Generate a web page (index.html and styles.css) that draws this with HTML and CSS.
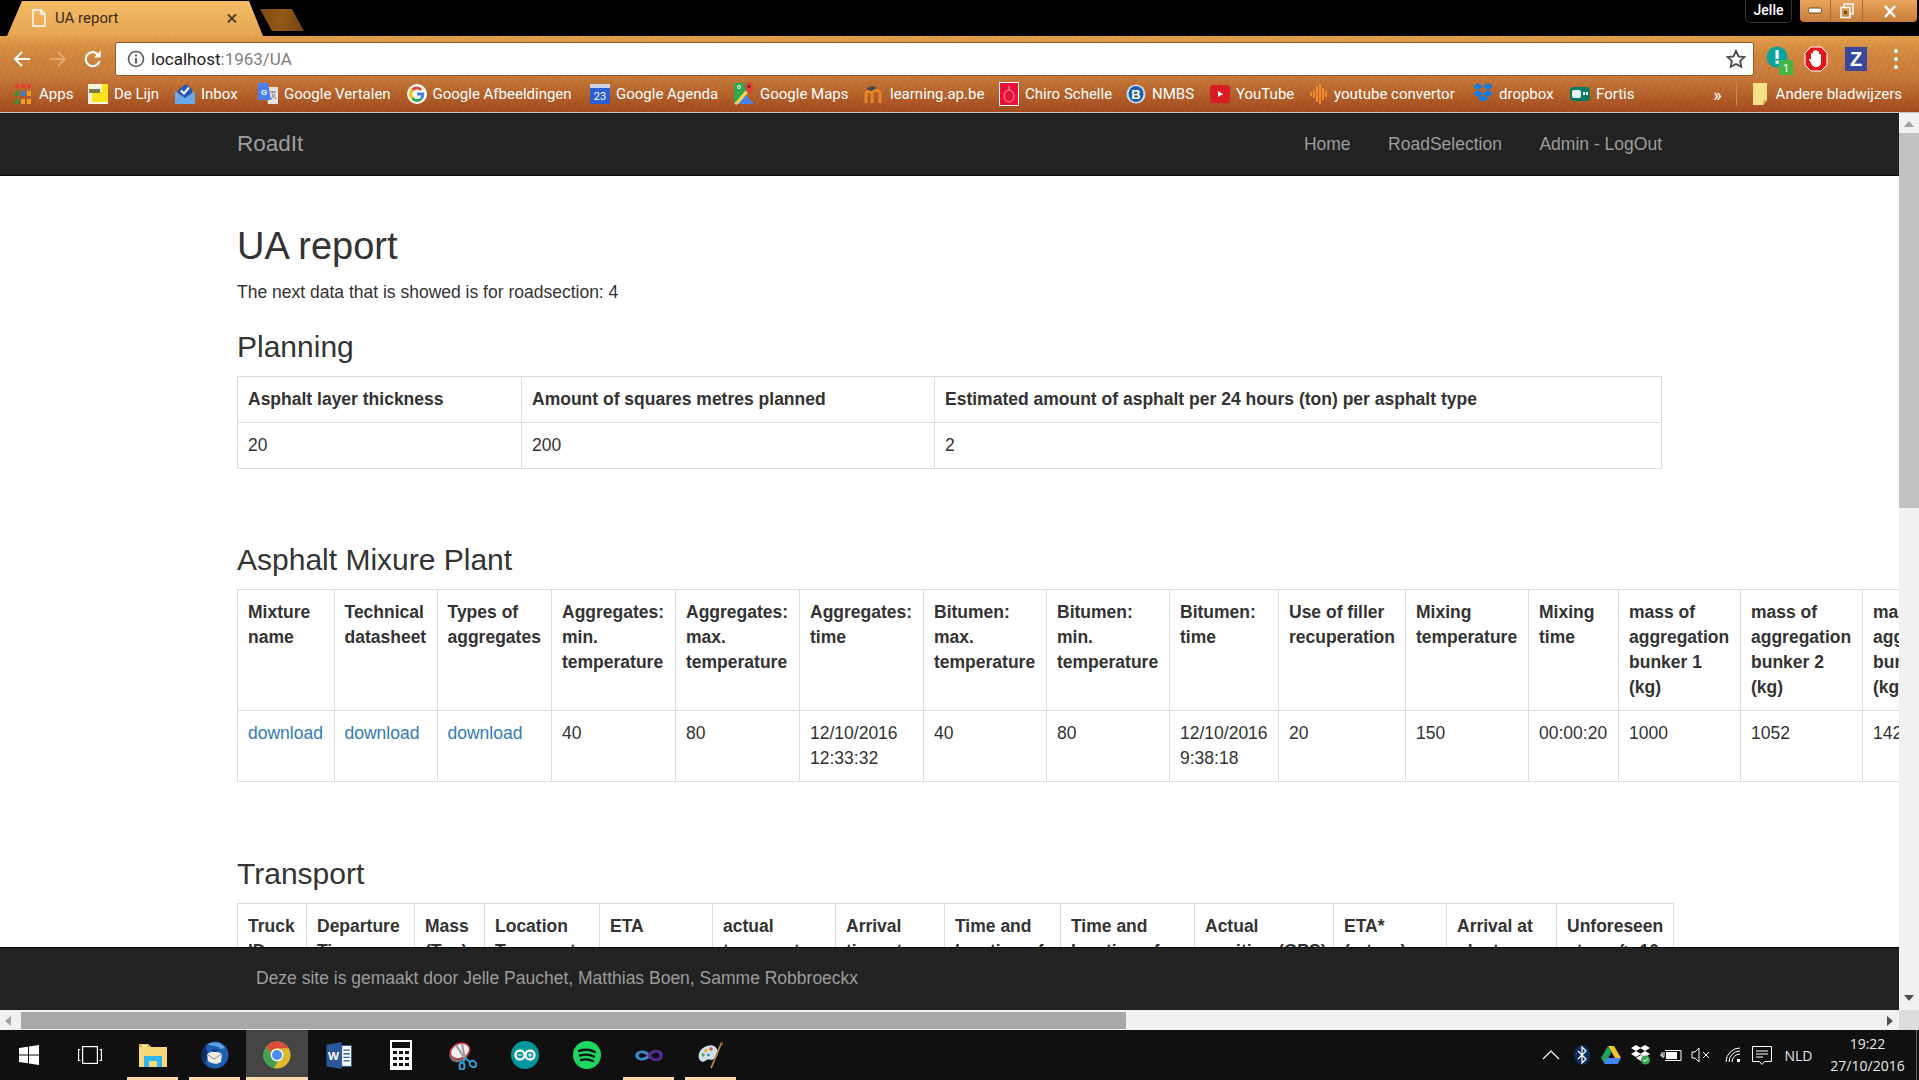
FILE: index.html
```html
<!DOCTYPE html>
<html>
<head>
    <meta charset="UTF-8">
    <title>UA report</title>
    <link rel="stylesheet" href="styles.css">
</head>
<body>
    <div class="tabstrip">
        <div class="tab">
            <svg class="tab-icon" width="14" height="18" viewBox="0 0 14 18"><path d="M1 1h8l4 4v12H1z M9 1v4h4" fill="none" stroke="#fff" stroke-width="1.4"/></svg>
            <span class="tab-title">UA report</span>
            <span class="tab-close">×</span>
        </div>
        <div class="newtab"></div>
        <div class="profile">Jelle</div>
        <div class="winctl">
            <div class="win-btn win-min"><svg width="14" height="8" viewBox="0 0 14 8"><rect x="0.5" y="1" width="13" height="5" rx="1.5" fill="#fff" stroke="#6b4a22"/></svg></div>
            <div class="win-btn win-max"><svg width="16" height="16" viewBox="0 0 16 16"><path d="M5 4V1h9v10h-3" fill="none" stroke="#fff" stroke-width="1.5"/><rect x="2" y="4.5" width="9" height="10" fill="none" stroke="#fff" stroke-width="1.5"/><rect x="5" y="8" width="3" height="3" fill="#6b4a22"/></svg></div>
            <div class="win-btn win-close"><svg width="14" height="13" viewBox="0 0 14 13"><path d="M2 1l10 11M12 1L2 12" stroke="#fff" stroke-width="2.6"/></svg></div>
        </div>
    </div>

    <div class="chrome-bars">
        <div class="toolbar">
            <svg class="nav-btn" width="20" height="20" viewBox="0 0 20 20"><path d="M18 10H3M10 3l-7 7 7 7" fill="none" stroke="#fff" stroke-width="2"/></svg>
            <svg class="nav-btn nav-dim" width="20" height="20" viewBox="0 0 20 20"><path d="M2 10h15M10 3l7 7-7 7" fill="none" stroke="#e8b27a" stroke-width="2"/></svg>
            <svg class="nav-btn" width="20" height="20" viewBox="0 0 20 20"><path d="M16.5 12a7 7 0 1 1-1.6-6.6" fill="none" stroke="#fff" stroke-width="2.2"/><path d="M17.8 1.5v7h-7z" fill="#fff"/></svg>
            <div class="omnibox">
                <svg width="18" height="18" viewBox="0 0 18 18"><circle cx="9" cy="9" r="7.5" fill="none" stroke="#5a5a5a" stroke-width="1.6"/><rect x="8" y="8" width="2" height="5.5" fill="#5a5a5a"/><rect x="8" y="4.6" width="2" height="2" fill="#5a5a5a"/></svg>
                <span class="url"><span class="url-host">localhost</span>:1963/UA</span>
                <svg class="star" width="20" height="20" viewBox="0 0 20 20"><path d="M10 1.8l2.5 5.5 6 .7-4.4 4 1.2 5.9L10 15l-5.300 2.900 1.200-5.900-4.400-4 6-.7z" fill="none" stroke="#4a4a4a" stroke-width="1.8"/></svg>
            </div>
            <div class="ext ext-first">
                <svg width="30" height="32" viewBox="0 0 30 32"><circle cx="12" cy="12" r="10.500" fill="#0aa29c"/><rect x="10.500" y="5" width="3.200" height="9" fill="#fff"/><rect x="10.500" y="15.500" width="3.200" height="3.200" fill="#fff"/><rect x="14" y="15" width="14" height="15" fill="#43b649"/><text x="21" y="27" font-family="Roboto" font-size="11" fill="#fff" text-anchor="middle">1</text></svg>
            </div>
            <div class="ext">
                <svg width="24" height="26" viewBox="0 0 24 26"><path d="M7 1h10l6 6v12l-6 6H7l-6-6V7z" fill="#e1161c" stroke="#fff" stroke-width="1"/><path d="M7 13V8a1 1 0 0 1 2 0V5.500a1 1 0 0 1 2 0V5a1 1 0 0 1 2 0v1a1 1 0 0 1 2 0v3a1 1 0 0 1 2 0v7c0 3-2 5-5 5s-4-2-5-4l-2-3c-.5-1 1-2 2 0z" fill="#fff"/></svg>
            </div>
            <div class="ext">
                <svg width="22" height="24" viewBox="0 0 22 24"><rect width="22" height="24" fill="#38489a"/><text x="11" y="19" font-family="Liberation Sans" font-weight="700" font-size="20" fill="#fff" text-anchor="middle">Z</text></svg>
            </div>
            <div class="ext ext-dots"><i></i><i></i><i></i></div>
        </div>

        <div class="bookmarks">
            <a class="bm">
                <svg width="18" height="20" viewBox="0 0 18 20"><g fill="#e8402f"><rect width="4" height="4"/><rect x="6" width="4" height="4"/><rect x="12" width="4" height="4"/></g><rect y="7" width="4" height="5" fill="#3a8f3f"/><rect x="6" y="7" width="4" height="5" fill="#2f7fe0"/><rect x="12" y="7" width="4" height="5" fill="#f0a020"/><rect y="15" width="4" height="5" fill="#3a8f3f"/><rect x="6" y="15" width="4" height="5" fill="#f0a020"/><rect x="12" y="15" width="4" height="5" fill="#f0a020"/></svg>
                Apps
            </a>
            <a class="bm">
                <svg width="20" height="20" viewBox="0 0 20 20"><rect width="20" height="20" fill="#f7f3e0"/><path d="M4 9l16-2v11H4z" fill="#fde21a"/><path d="M14 0h6v7l-6 1z" fill="#fde21a"/><rect x="1" y="5" width="11" height="4" fill="#7a7a50"/></svg>
                De Lijn
            </a>
            <a class="bm">
                <svg width="20" height="20" viewBox="0 0 20 20"><path d="M0 7l10 7 10-7v13H0z" fill="#6aa8ea"/><path d="M3 6l8-6 6 5v4l-7 5-7-5z" fill="#2a55b8"/><path d="M6 6.500l3 3 5-6" fill="none" stroke="#fff" stroke-width="2"/></svg>
                Inbox
            </a>
            <a class="bm">
                <svg width="20" height="22" viewBox="0 0 20 22"><path d="M8 4h12v17H10z" fill="#e4e4e4"/><path d="M0 0h10l3 17H0z" fill="#4a80ee"/><text x="6" y="12" font-family="Liberation Sans" font-weight="700" font-size="8" fill="#fff" text-anchor="middle">G</text><path d="M12 9h6M15 8v2M13 16l4-5M14 11l4 5" stroke="#777" stroke-width="1" fill="none"/></svg>
                Google Vertalen
            </a>
            <a class="bm">
                <svg width="20" height="20" viewBox="0 0 20 20"><circle cx="10" cy="10" r="10" fill="#fff"/><path d="M15.500 6a7 7 0 0 0-11-1.500L6.500 7a4 4 0 0 1 6-.5z" fill="#ea4335"/><path d="M4.500 4.500a7.500 7.500 0 0 0 0 11L6.700 13a4 4 0 0 1 0-6z" fill="#fbbc05"/><path d="M4.500 15.500a7.500 7.500 0 0 0 10.500.5L13 14a4 4 0 0 1-6.300-1z" fill="#34a853"/><path d="M10 8.500h7.200c.4 3-.5 5.700-2.200 7.500L13 14c.7-.5 1.200-1.300 1.400-2.500H10z" fill="#4285f4"/></svg>
                Google Afbeeldingen
            </a>
            <a class="bm">
                <svg width="20" height="20" viewBox="0 0 20 20"><rect width="20" height="20" rx="1" fill="#2c5fd4"/><rect width="20" height="4" fill="#c9d4e8"/><text x="10" y="16" font-family="Roboto" font-size="11" fill="#fff" text-anchor="middle">23</text></svg>
                Google Agenda
            </a>
            <a class="bm">
                <svg width="20" height="24" viewBox="0 0 20 24"><path d="M0 1h15v9L0 22z" fill="#2fa84f"/><path d="M0 22L10 11l10 11z" fill="#4a80ee"/><path d="M0 22L12 8l3 2L3 23z" fill="#f5d547"/><path d="M15 0a4.500 4.500 0 0 1 4.500 4.500C19.500 8 16 10 15 14c-1-4-4.500-6-4.500-9.500A4.500 4.500 0 0 1 15 0z" fill="#d8433a"/><circle cx="15" cy="4.500" r="1.500" fill="#7a1f1a"/><circle cx="5" cy="5" r="1.500" fill="none" stroke="#fff"/></svg>
                Google Maps
            </a>
            <a class="bm">
                <svg width="20" height="20" viewBox="0 0 20 20"><path d="M2 19v-9a3 3 0 0 1 6 0v9M8 19v-9a4 4 0 0 1 8 0v9" fill="none" stroke="#e8862a" stroke-width="3"/><path d="M2 5l6-3 5 2-6 3z" fill="#444"/></svg>
                learning.ap.be
            </a>
            <a class="bm">
                <svg width="20" height="24" viewBox="0 0 20 24"><rect width="20" height="24" fill="#fff"/><rect x="1" y="1" width="18" height="22" fill="#ea1238"/><ellipse cx="10" cy="14" rx="5" ry="6" fill="none" stroke="#f7a0a8"/><path d="M10 8V4" stroke="#f7a0a8"/></svg>
                Chiro Schelle
            </a>
            <a class="bm">
                <svg width="20" height="20" viewBox="0 0 20 20"><circle cx="10" cy="10" r="9.500" fill="#cfe0f0"/><ellipse cx="10" cy="10" rx="7.500" ry="8" fill="#1d5fae"/><text x="10" y="15" font-family="Liberation Sans" font-weight="700" font-size="13" fill="#fff" text-anchor="middle">B</text></svg>
                NMBS
            </a>
            <a class="bm">
                <svg width="20" height="18" viewBox="0 0 20 18"><rect width="20" height="18" rx="3" fill="#d81e22"/><path d="M8 6l5 3-5 3z" fill="#fff"/></svg>
                YouTube
            </a>
            <a class="bm">
                <svg width="18" height="20" viewBox="0 0 18 20"><path d="M1 8v4M4 6v8M7 2v16M10 0v20M13 4v12M16 7v6" stroke="#f08a2a" stroke-width="2"/></svg>
                youtube convertor
            </a>
            <a class="bm">
                <svg width="20" height="22" viewBox="0 0 20 22"><path d="M5 0l5 3.500L5 7 0 3.500zM15 0l5 3.500L15 7l-5-3.500zM5 7l5 3.500L5 14l-5-3.500zM15 7l5 3.500L15 14l-5-3.500zM10 12l5 3.500-5 3.500-5-3.500z" fill="#0d7be8"/></svg>
                dropbox
            </a>
            <a class="bm">
                <svg width="20" height="14" viewBox="0 0 20 14"><rect width="20" height="14" rx="4" fill="#087a66"/><rect x="2" y="3" width="9" height="8" rx="2" fill="#e8f4f0"/><rect x="13" y="5" width="2" height="3" fill="#fff"/><rect x="16" y="5" width="2" height="3" fill="#fff"/></svg>
                Fortis
            </a>
            <span class="bm-more">»</span>
            <span class="bm-sep"></span>
            <a class="bm-other">
                <svg width="16" height="22" viewBox="0 0 16 22"><path d="M1 0h14v17l-4 5H1z" fill="#fbe08a"/><path d="M15 17l-4 5v-5z" fill="#e6bb4a"/></svg>
                Andere bladwijzers
            </a>
        </div>
    </div>

    <div class="viewport">
        <div class="page">
            <nav class="navbar">
                <a class="brand">RoadIt</a>
                <div class="nav-links">
                    <a>Home</a>
                    <a>RoadSelection</a>
                    <a>Admin - LogOut</a>
                </div>
            </nav>
            <main class="content">
                <h2>UA report</h2>
                <p>The next data that is showed is for roadsection: 4</p>

                <h3>Planning</h3>
                <table class="plan-table">
                    <colgroup><col><col><col></colgroup>
                    <tr>
                        <th>Asphalt layer thickness</th>
                        <th>Amount of squares metres planned</th>
                        <th>Estimated amount of asphalt per 24 hours (ton) per asphalt type</th>
                    </tr>
                    <tr>
                        <td>20</td>
                        <td>200</td>
                        <td>2</td>
                    </tr>
                </table>

                <h3 class="section section-mix">Asphalt Mixure Plant</h3>
                <table class="mix-table">
                    <colgroup><col><col><col><col><col><col><col><col><col><col><col><col><col><col><col></colgroup>
                    <tr>
                        <th>Mixture name</th>
                        <th>Technical datasheet</th>
                        <th>Types of aggregates</th>
                        <th>Aggregates: min. temperature</th>
                        <th>Aggregates: max. temperature</th>
                        <th>Aggregates: time</th>
                        <th>Bitumen: max. temperature</th>
                        <th>Bitumen: min. temperature</th>
                        <th>Bitumen: time</th>
                        <th>Use of filler recuperation</th>
                        <th>Mixing temperature</th>
                        <th>Mixing time</th>
                        <th>mass of aggregation bunker 1 (kg)</th>
                        <th>mass of aggregation bunker 2 (kg)</th>
                        <th>mass of aggregation bunker 3 (kg)</th>
                    </tr>
                    <tr>
                        <td><a href="#">download</a></td>
                        <td><a href="#">download</a></td>
                        <td><a href="#">download</a></td>
                        <td>40</td>
                        <td>80</td>
                        <td>12/10/2016 12:33:32</td>
                        <td>40</td>
                        <td>80</td>
                        <td>12/10/2016 9:38:18</td>
                        <td>20</td>
                        <td>150</td>
                        <td>00:00:20</td>
                        <td>1000</td>
                        <td>1052</td>
                        <td>1420</td>
                    </tr>
                </table>

                <h3 class="section">Transport</h3>
                <table class="transport-table">
                    <colgroup><col><col><col><col><col><col><col><col><col><col><col><col><col></colgroup>
                    <tr>
                        <th>Truck ID</th>
                        <th>Departure Time</th>
                        <th>Mass (Ton)</th>
                        <th>Location Transport</th>
                        <th>ETA</th>
                        <th>actual transport</th>
                        <th>Arrival time at</th>
                        <th>Time and location of</th>
                        <th>Time and location of</th>
                        <th>Actual position&nbsp;(GPS)</th>
                        <th>ETA* (return)</th>
                        <th>Arrival at plant</th>
                        <th>Unforeseen stops (> 10</th>
                    </tr>
                </table>
            </main>
            <footer class="footer">Deze site is gemaakt door Jelle Pauchet, Matthias Boen, Samme Robbroeckx</footer>
        </div>

        <div class="vscroll">
            <span class="arrow arrow-up"></span>
            <div class="vthumb"></div>
            <span class="arrow arrow-down"></span>
        </div>
        <div class="hscroll">
            <span class="arrow arrow-left"></span>
            <div class="hthumb"></div>
            <span class="arrow arrow-right"></span>
        </div>
        <div class="corner"></div>
    </div>

    <div class="taskbar">
        <div class="task">
            <svg width="20" height="20" viewBox="0 0 20 20"><path d="M0 3l9-1.300V9.500H0zM10 1.500L20 0v9.500H10zM0 10.500h9v7.800L0 17zM10 10.500h10V20l-10-1.500z" fill="#fff"/></svg>
        </div>
        <div class="task task-view">
            <svg width="24" height="18" viewBox="0 0 24 18" fill="none" stroke="#fff" stroke-width="1.200"><rect x="4.600" y="0.600" width="14.800" height="16.800"/><path d="M2.400 3.500H0.600v11h1.800M21.600 3.500h1.800v11h-1.800"/></svg>
        </div>
        <div class="task task-open">
            <svg width="28" height="23" viewBox="0 0 28 23"><path d="M0 1h10l2 2h16v20H0z" fill="#f7d879"/><rect y="0" width="10" height="3" fill="#e6b43c"/><rect x="3" y="1" width="5" height="1.500" fill="#fff"/><path d="M5 23V12h18v11h-5v-6h-8v6z" fill="#2fb6ef"/></svg>
        </div>
        <div class="task task-open">
            <svg width="29" height="28" viewBox="0 0 29 28"><circle cx="15" cy="14" r="13.500" fill="#1d5fb0"/><path d="M8 4c5-4 13-3 17 3l-4 1c-3-3-8-4-13-4z" fill="#5da3e0"/><path d="M1.500 14c0-5 2-8 5-10-1 4 0 6 2 8l-3 10c-2-2-4-5-4-8z" fill="#0a2f6a"/><path d="M7 13c4-3 11-3 15 0l-1 8c-4 3-9 2-13-1z" fill="#f0ece4"/><path d="M7 13l7 5 8-5" fill="none" stroke="#8a8a8a"/><path d="M11 9c2-1 5-1 7 0l-3 2z" fill="#123a78"/></svg>
        </div>
        <div class="task task-active">
            <svg width="28" height="28" viewBox="0 0 30 30"><circle cx="15" cy="15" r="14.500" fill="#ddb92f"/><path d="M15 .5a14.500 14.500 0 0 1 12.600 7.300H15a7.200 7.200 0 0 0-6.800 4.800L3.800 5.500A14.500 14.500 0 0 1 15 .5z" fill="#dc4c3e"/><path d="M3.800 5.500l6 10.400a6 6 0 0 0 6.400 5l-4.500 8.300A14.500 14.500 0 0 1 3.800 5.500z" fill="#41a14e"/><circle cx="15" cy="15" r="6.800" fill="#fff"/><circle cx="15" cy="15" r="5.400" fill="#4c8bf0"/></svg>
        </div>
        <div class="task">
            <svg width="28" height="27" viewBox="0 0 28 30"><path d="M0 3l17-3v30L0 27z" fill="#2b579a"/><rect x="17" y="4" width="11" height="23" fill="#fff" stroke="#2b579a"/><path d="M19 9h7M19 13h7M19 17h7M19 21h7" stroke="#2b579a" stroke-width="1.500"/><text x="8" y="20" font-family="Liberation Sans" font-weight="700" font-size="13" fill="#fff" text-anchor="middle">W</text></svg>
        </div>
        <div class="task">
            <svg width="22" height="30" viewBox="0 0 22 30"><rect width="22" height="30" fill="#fff"/><rect x="2" y="2" width="18" height="6" fill="#101010"/><g fill="#101010"><rect x="3" y="11" width="4" height="3"/><rect x="9" y="11" width="4" height="3"/><rect x="15" y="11" width="4" height="3"/><rect x="3" y="17" width="4" height="3"/><rect x="9" y="17" width="4" height="3"/><rect x="15" y="17" width="4" height="3"/><rect x="3" y="23" width="4" height="3"/><rect x="9" y="23" width="4" height="3"/><rect x="15" y="23" width="4" height="3"/></g></svg>
        </div>
        <div class="task">
            <svg width="28" height="29" viewBox="0 0 28 29"><ellipse cx="10" cy="13" rx="10" ry="8" transform="rotate(-25 10 13)" fill="#777"/><ellipse cx="11" cy="10" rx="10" ry="7.500" transform="rotate(-25 11 10)" fill="#f2f0ee" stroke="#c8323c" stroke-width="1.500"/><path d="M7 4l9 14M13 3l3 15" stroke="#9a9a9a" stroke-width="2"/><path d="M16 17l-2 5M16 17l5 4" stroke="#2f9fd8" stroke-width="2"/><ellipse cx="13" cy="25" rx="2.500" ry="3.500" fill="none" stroke="#2f9fd8" stroke-width="2"/><ellipse cx="24" cy="23" rx="3" ry="3.500" transform="rotate(-50 24 23)" fill="none" stroke="#2f9fd8" stroke-width="2"/></svg>
        </div>
        <div class="task">
            <svg width="28" height="28" viewBox="0 0 28 28"><circle cx="14" cy="14" r="14" fill="#00979c"/><g fill="none" stroke="#fff" stroke-width="2.400"><circle cx="9" cy="14" r="4.500"/><circle cx="19" cy="14" r="4.500"/></g><path d="M7 14h4M17 14h4M19 12v4" stroke="#fff" stroke-width="1.200"/></svg>
        </div>
        <div class="task">
            <svg width="28" height="28" viewBox="0 0 28 28"><ellipse cx="14" cy="14" rx="14" ry="14" fill="#1ed760"/><path d="M6 10c6-2 11-1.500 16 1M7 14.500c5-1.500 10-1 14 1M8 19c4-1 8-1 12 1" fill="none" stroke="#111" stroke-width="2.400" stroke-linecap="round"/></svg>
        </div>
        <div class="task task-open">
            <svg width="28" height="15" viewBox="0 0 28 20" preserveAspectRatio="none"><path d="M14 10C10 3 2 4 2 10s8 7 12 0z" fill="none" stroke="#3f86c6" stroke-width="3.500"/><path d="M14 10c4-8 12-7 12 0s-8 8-12 0z" fill="none" stroke="#5b2a9a" stroke-width="3.500"/></svg>
        </div>
        <div class="task task-open">
            <svg width="30" height="28" viewBox="0 0 30 32"><path d="M13 5C5 6 0 12 1 19c1 5 6 6 8 3 2-2 5 0 8-1 6-2 7-8 5-12-2-3-5-5-9-4z" fill="#cfe0ea"/><circle cx="9" cy="11" r="2" fill="#e8b82a"/><circle cx="15" cy="9" r="2" fill="#d85040"/><circle cx="6" cy="16" r="2" fill="#4caf50"/><circle cx="12" cy="16" r="1.500" fill="#3a70c0"/><path d="M15 31L27 2" stroke="#b8863a" stroke-width="2"/><path d="M26 4l2-4 1 5z" fill="#7a5a2a"/></svg>
        </div>
        <div class="tray">
            <svg class="tray-chevron" width="18" height="10" viewBox="0 0 18 10"><path d="M1 9l8-8 8 8" fill="none" stroke="#fff" stroke-width="1.200"/></svg>
            <svg class="tray-bt" width="16" height="20" viewBox="0 0 16 20"><ellipse cx="8" cy="10" rx="8" ry="10" fill="#0a2f5e"/><path d="M4 6l8 8-4 4V2l4 4-8 8" fill="none" stroke="#fff" stroke-width="1.200"/></svg>
            <svg class="tray-drive" width="20" height="18" viewBox="0 0 20 18"><path d="M7 0h6l7 12h-6z" fill="#f2c42c"/><path d="M7 0l3.500 6L4 18l-4-6z" fill="#1fa463"/><path d="M6 12h14l-3.500 6H3z" fill="#4285f4"/></svg>
            <svg class="tray-dropbox" width="20" height="20" viewBox="0 0 20 20"><path d="M5 0l5 3-5 3-5-3zM14 0l5 3-5 3-5-3zM5 6l5 3-5 3-5-3zM14 6l5 3-5 3-5-3zM5 13l5-3 5 3-5 3z" fill="#fff"/><circle cx="14.500" cy="15" r="4.500" fill="#3aa655"/><path d="M12.500 15l1.500 1.500 2.500-3" fill="none" stroke="#fff"/></svg>
            <svg class="tray-battery" width="22" height="14" viewBox="0 0 22 14"><path d="M5 2.500h16v10H5" fill="none" stroke="#fff"/><rect x="6" y="4" width="11" height="7" fill="#fff"/><path d="M0 7h3M2 4v5h2V4" stroke="#fff" fill="none"/></svg>
            <svg class="tray-sound" width="20" height="16" viewBox="0 0 20 16"><path d="M1 5h3l4-4v14l-4-4H1z" fill="none" stroke="#fff"/><path d="M12 5l6 6M18 5l-6 6" stroke="#fff"/></svg>
            <svg class="tray-wifi" width="16" height="16" viewBox="0 0 16 16"><path d="M1 15a14 14 0 0 1 14-14M4 15a11 11 0 0 1 11-11M7 15a8 8 0 0 1 8-8" fill="none" stroke="#fff" stroke-width="1"/><rect x="12" y="12" width="3" height="3" fill="#fff"/></svg>
            <svg class="tray-msg" width="20" height="19" viewBox="0 0 20 19"><path d="M.5.500h19v15h-7l-2.500 3-2.500-3h-7z" fill="none" stroke="#fff"/><path d="M4 5h12M4 8h12M4 11h7" stroke="#fff"/></svg>
            <span class="tray-lang">NLD</span>
            <div class="clock">
                <span>19:22</span>
                <span>27/10/2016</span>
            </div>
            <span class="show-desktop"></span>
        </div>
    </div>
</body>
</html>
```

FILE: styles.css
```css
* {
    box-sizing: border-box;
}
body {
    margin: 0;
    height: 100vh;
    overflow: hidden;
    display: flex;
    flex-direction: column;
    font-family: "Liberation Sans", Arial, sans-serif;
    font-size: 17.5px;
    line-height: 25px;
    color: #333;
    background: #fff;
}

/* browser window */
.tabstrip {
    height: 36px;
    flex: none;
    display: flex;
    background: #000;
    font-family: Roboto, sans-serif;
}
.tab {
    width: 256px;
    height: 36px;
    margin: 0 0 0 7px;
    padding: 0 0 0 25px;
    display: flex;
    align-items: center;
    color: #3a2a14;
    font-size: 15px;
    background: linear-gradient(#f4bd66, #e6a552);
    clip-path: polygon(0 100%, 15px 1px, 242px 1px, 256px 100%);
}
.tab-icon {
    flex: none;
}
.tab-title {
    margin-left: 9px;
}
.tab-close {
    margin-left: 108px;
    font-size: 21px;
    color: #4a3a22;
}
.newtab {
    width: 44px;
    height: 22px;
    margin: 9px 0 0 -3px;
    background: linear-gradient(100deg, #7c4a12, #94591a 50%, #6f4210);
    clip-path: polygon(0 0, 32px 0, 44px 100%, 12px 100%);
}
.profile {
    width: 47px;
    height: 23px;
    margin-left: auto;
    border: 1px solid #333;
    border-top: 0;
    border-radius: 0 0 5px 5px;
    color: #fff;
    font-size: 14px;
    font-weight: 500;
    line-height: 21px;
    text-align: center;
}
.winctl {
    height: 22px;
    margin: 0 2px 0 8px;
    display: flex;
    border-radius: 0 0 4px 4px;
    overflow: hidden;
    background: linear-gradient(#e9a55a, #c67c3a);
}
.win-btn {
    display: flex;
    align-items: center;
    justify-content: center;
    border-right: 1px solid #a86a30;
}
.win-min {
    width: 31px;
}
.win-max {
    width: 32px;
}
.win-close {
    width: 54px;
    border-right: 0;
}
.chrome-bars {
    flex: none;
    background:
        repeating-linear-gradient(115deg, rgba(255, 255, 255, .02) 0 2px, rgba(0, 0, 0, .015) 2px 6px),
        linear-gradient(#e59f4c 0%, #d58a40 20%, #c87a38 52%, #a3481c 100%);
}
.toolbar {
    height: 39px;
    display: flex;
    padding: 6px 0 0 12px;
    font-family: Roboto, sans-serif;
}
.nav-btn {
    flex: none;
    margin: 7px 16px 0 0;
}
.nav-dim {
    opacity: .8;
    margin-right: 15px;
}
.omnibox {
    width: 1639px;
    height: 34px;
    margin-left: -4px;
    padding: 0 7px 0 11px;
    display: flex;
    align-items: center;
    background: #fff;
    border: 1px solid #8f5a28;
    border-radius: 3px;
}
.url {
    margin-left: 6px;
    font-size: 17px;
    color: #808080;
}
.url-host {
    color: #222;
}
.star {
    margin-left: auto;
}
.ext {
    width: 40px;
    height: 34px;
    display: flex;
    align-items: center;
    justify-content: center;
}
.ext-first {
    width: 42px;
    padding: 4px 0 0 9px;
}
.ext-dots {
    flex-direction: column;
    gap: 4px;
}
.ext-dots i {
    width: 4px;
    height: 4px;
    border-radius: 2px;
    background: #fff;
}
.bookmarks {
    height: 38px;
    padding: 1px 0 0 15px;
    display: flex;
    align-items: center;
    border-bottom: 1px solid #c4c4c4;
    font-family: Roboto, sans-serif;
    font-size: 15px;
    white-space: nowrap;
    color: #fff;
}
.bookmarks a {
    color: #fff;
}
.bm {
    flex: none;
    display: flex;
    align-items: center;
    gap: 6px;
}
.bm:nth-child(1) { width: 73px; }
.bm:nth-child(2) { width: 87px; }
.bm:nth-child(3) { width: 83px; }
.bm:nth-child(4) { width: 148.5px; }
.bm:nth-child(5) { width: 183.5px; }
.bm:nth-child(6) { width: 144px; }
.bm:nth-child(7) { width: 130px; }
.bm:nth-child(8) { width: 135px; }
.bm:nth-child(9) { width: 127px; }
.bm:nth-child(10) { width: 84px; }
.bm:nth-child(11) { width: 100px; }
.bm:nth-child(12) { width: 163px; }
.bm:nth-child(13) { width: 97px; }
.bm-more {
    margin-left: auto;
    font-size: 18px;
}
.bm-sep {
    width: 1px;
    height: 24px;
    margin: 0 15px 0 14px;
    background: #c98a54;
}
.bm-other {
    display: flex;
    align-items: center;
    gap: 8px;
    margin-right: 17px;
}

/* page inside the browser */
.viewport {
    flex: 1;
    min-height: 0;
    display: grid;
    grid-template-columns: 1fr 20px;
    grid-template-rows: 1fr 20px;
}
.page {
    min-width: 0;
    min-height: 0;
    display: flex;
    flex-direction: column;
}
.navbar {
    flex: none;
    height: 63px;
    padding: 0 237px 0 237px;
    display: flex;
    align-items: center;
    justify-content: space-between;
    background: #222;
    border-bottom: 1px solid #080808;
    color: #9d9d9d;
}
.brand {
    margin-top: -2px;
    font-size: 22.5px;
}
.nav-links {
    display: flex;
    gap: 37.5px;
}
.content {
    flex: 1;
    min-height: 0;
    overflow: hidden;
    padding: 50px 0 0 237px;
}
.content h2 {
    margin: 0 0 12.5px;
    font-size: 38px;
    font-weight: 500;
    line-height: 41px;
}
.content p {
    margin: 0 0 25px;
}
.content h3 {
    margin: 0 0 13px;
    font-size: 30px;
    font-weight: 500;
    line-height: 33px;
}
.content h3.section {
    margin-top: 75px;
}
.content h3.section-mix {
    margin-top: 74px;
}
table {
    table-layout: fixed;
    border-collapse: collapse;
}
th,
td {
    padding: 10px;
    border: 1px solid #ddd;
    text-align: left;
    vertical-align: top;
}
a {
    color: #337ab7;
    text-decoration: none;
}
.navbar a {
    color: #9d9d9d;
}
.plan-table {
    width: 1424px;
}
.plan-table col:nth-child(1) { width: 284px; }
.plan-table col:nth-child(2) { width: 413px; }
.plan-table col:nth-child(3) { width: 727px; }
.mix-table {
    width: 1747px;
}
.mix-table col:nth-child(1) { width: 96.5px; }
.mix-table col:nth-child(2) { width: 103px; }
.mix-table col:nth-child(3) { width: 114.5px; }
.mix-table col:nth-child(4) { width: 124px; }
.mix-table col:nth-child(5) { width: 124px; }
.mix-table col:nth-child(6) { width: 124px; }
.mix-table col:nth-child(7) { width: 123px; }
.mix-table col:nth-child(8) { width: 123px; }
.mix-table col:nth-child(9) { width: 109px; }
.mix-table col:nth-child(10) { width: 127px; }
.mix-table col:nth-child(11) { width: 123px; }
.mix-table col:nth-child(12) { width: 90px; }
.mix-table col:nth-child(13) { width: 122px; }
.mix-table col:nth-child(14) { width: 122px; }
.mix-table col:nth-child(15) { width: 122px; }
.transport-table {
    width: 1436px;
}
.transport-table col:nth-child(1) { width: 69px; }
.transport-table col:nth-child(2) { width: 108px; }
.transport-table col:nth-child(3) { width: 70px; }
.transport-table col:nth-child(4) { width: 115px; }
.transport-table col:nth-child(5) { width: 113px; }
.transport-table col:nth-child(6) { width: 123px; }
.transport-table col:nth-child(7) { width: 109px; }
.transport-table col:nth-child(8) { width: 116px; }
.transport-table col:nth-child(9) { width: 134px; }
.transport-table col:nth-child(10) { width: 139px; }
.transport-table col:nth-child(11) { width: 113px; }
.transport-table col:nth-child(12) { width: 110px; }
.transport-table col:nth-child(13) { width: 117px; }
.footer {
    flex: none;
    height: 63px;
    padding: 18px 0 0 256px;
    background: #222;
    border-top: 1px solid #080808;
    color: #9d9d9d;
}

/* scrollbars */
.vscroll {
    display: flex;
    flex-direction: column;
    align-items: center;
    background: #f1f1f1;
    padding: 8px 0 9px;
}
.vthumb {
    width: 100%;
    height: 375px;
    margin-top: 6px;
    background: #c1c1c1;
}
.arrow-down {
    margin-top: auto;
}
.arrow {
    width: 0;
    height: 0;
    flex: none;
    border: 5px solid transparent;
}
.arrow-up {
    border-top: 0;
    border-bottom: 6px solid #a3a3a3;
}
.arrow-down {
    border-bottom: 0;
    border-top: 6px solid #505050;
}
.hscroll {
    display: flex;
    align-items: center;
    padding: 2px 6px 1px 5px;
    background: #f1f1f1;
}
.hthumb {
    width: 1105px;
    height: 17px;
    margin-left: 10px;
    background: #a8a8a8;
}
.arrow-left {
    border-left: 0;
    border-right: 6px solid #a3a3a3;
}
.arrow-right {
    margin-left: auto;
    border-right: 0;
    border-left: 6px solid #505050;
}
.corner {
    background: #dcdcdc;
}

/* windows taskbar */
.taskbar {
    height: 50px;
    flex: none;
    display: flex;
    background: #101010;
    font-family: "Open Sans", sans-serif;
    color: #e8e8e8;
}
.task {
    width: 62px;
    height: 50px;
    flex: none;
    display: flex;
    align-items: center;
    justify-content: center;
    position: relative;
}
.task:first-child {
    margin-left: -2.5px;
}
.task:first-child svg {
    margin-left: 1px;
}
.task-view svg {
    margin-right: 2px;
}
.task-open::after {
    content: "";
    position: absolute;
    left: 5px;
    right: 6px;
    bottom: 0;
    height: 3px;
    background: #fcd9ae;
}
.task-active {
    background: #444;
}
.task-active::after {
    content: "";
    position: absolute;
    left: 0;
    right: 0;
    bottom: 0;
    height: 3px;
    background: #fcd9ae;
}
.tray {
    flex: 1;
    display: flex;
    align-items: center;
    padding-left: 800px;
}
.tray svg {
    flex: none;
}
.tray-bt { margin-left: 14px; }
.tray-drive { margin-left: 11px; }
.tray-dropbox { margin-left: 10px; }
.tray-battery { margin-left: 9px; }
.tray-sound { margin-left: 9px; }
.tray-wifi { margin-left: 14px; }
.tray-msg { margin-left: 11px; }
.tray-lang {
    margin-left: 13px;
    font-size: 14px;
}
.clock {
    width: 88px;
    margin-left: 11px;
    display: flex;
    flex-direction: column;
    align-items: center;
    font-size: 14px;
    line-height: 22px;
}
.show-desktop {
    width: 1px;
    height: 50px;
    margin-left: 4px;
    background: #666;
}
```
